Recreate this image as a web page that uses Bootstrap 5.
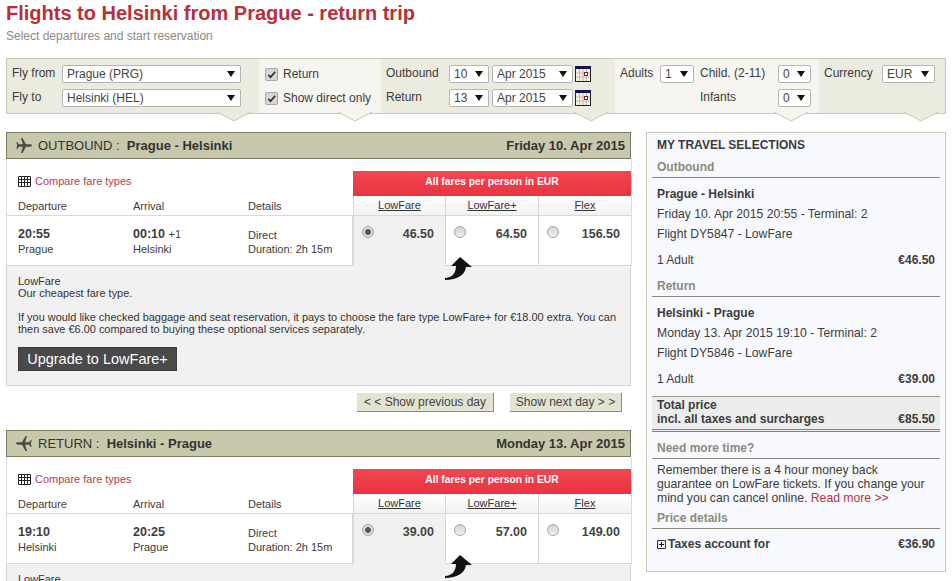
<!DOCTYPE html>
<html lang="en">
<head>
<meta charset="utf-8">
<title>Flights to Helsinki from Prague</title>
<link rel="stylesheet" href="https://cdn.jsdelivr.net/npm/bootstrap@5.3.0/dist/css/bootstrap.min.css">
<style>
html,body{overflow:hidden;height:581px;}
body{font-family:"Liberation Sans",Arial,sans-serif;font-size:12px;line-height:14px;color:#3c3c3c;background:#fff;padding:0 6px;}
.page-title{font-size:20px;line-height:24px;font-weight:700;color:#b92f38;margin:1px 0 0;}
.page-sub{color:#8a8a8a;font-size:12px;line-height:14px;margin:4px 0 0;}
.search-bar{height:56px;margin-top:15px;border:1px solid #c9c9b2;}
.seg{position:relative;height:54px;padding:6px 0 0 5px;display:grid;row-gap:6px;grid-auto-rows:18px;align-items:center;background:#ecebdf;}
.seg-light{background:#f6f5ef;}
.seg>span{padding-bottom:2px;}
.seg1{width:252px;grid-template-columns:50px 179px;}
.seg2{width:122px;padding-left:6px;}
.seg3{width:234px;padding-left:5px;grid-template-columns:63px 40px 84px 19px;}
.seg3 .sel-month{margin-left:3px;width:81px;}
.seg3 .cal{margin-left:2px;}
.seg4{width:204px;padding-left:5px;grid-template-columns:40px 34px 84px 33px;}
.seg4 .lab2{padding-left:6px;}
.seg5{flex:1;padding-left:5px;grid-template-columns:58px 53px;}
.notch{position:absolute;top:53px;width:34px;height:10px;display:block;}
.seg1 .notch{left:210px}.seg2 .notch{left:79px}.seg3 .notch{left:193px}.seg4 .notch{left:159px}.seg5 .notch{left:85px}
.seg .notch{fill:#ecebdf}.seg-light .notch{fill:#f6f5ef}
.form-select.pick{height:18px;min-height:0;padding:0 14px 0 4px;font-size:12px;line-height:16px;color:#444;border:1px solid #b5b5b5;border-radius:2px;font-family:inherit;background-position:right 5px center;background-size:8px 6px;background-image:url("data:image/svg+xml,%3Csvg xmlns='http://www.w3.org/2000/svg' viewBox='0 0 8 6'%3E%3Cpath d='M0 0h8L4 6z' fill='%23111'/%3E%3C/svg%3E");box-shadow:none;}
.tick{display:flex;align-items:center;gap:5px;margin:0;white-space:nowrap;}
.tick .form-check-input{width:13px;height:13px;margin:0;border:1px solid #a8a8a8;border-radius:2px;background-color:#d6d6d6;background-size:11px;background-image:url("data:image/svg+xml,%3Csvg xmlns='http://www.w3.org/2000/svg' viewBox='0 0 12 12'%3E%3Cpath d='M2.5 6.5l2.500 2.500 5-6' fill='none' stroke='%23333' stroke-width='2'/%3E%3C/svg%3E");}
.main-wrap{margin-top:18px;gap:15px;align-items:flex-start;}
.left-col{width:625px;flex:none;}
.side-panel{width:300px;height:440px;flex:none;background:#f8f9fe;border:1px solid #c9c9b6;padding:0 5px;}
.sec-head{height:27px;background:#c8c8ac;border:1px solid #7c7c66;padding:0 5px 0 9px;font-size:13px;color:#333;}
.sec-head .plane{margin-right:6px;}
.flights{height:107px;}
.flight-left{width:347px;flex:none;border-left:1px solid #dcdcdc;}
.flight-top{height:57px;padding:15px 0 0 11px;border-bottom:1px solid #d8d8d8;}
.compare{display:flex;align-items:center;gap:4px;font-size:11px;line-height:14px;color:#b8404a;text-decoration:none;}
.flight-cols{margin-top:11px;font-size:11px;}
.c1{width:115px;}.c2{width:115px;}
.flight-row{height:50px;padding:11px 0 0 11px;border-bottom:1px solid #d8d8d8;border-right:1px solid #d8d8d8;font-size:11px;line-height:14px;}
.flight-row strong{display:block;font-size:12.5px;line-height:15px;}
.plus-one{font-size:11px;font-weight:400;}
.details{padding-top:1px;}
.fares{flex:1;border-right:1px solid #dcdcdc;}
.red-bar{height:25px;margin-top:12px;background:linear-gradient(#f24751,#ea3340);color:#fff;font-weight:700;font-size:10.300px;line-height:22px;text-align:center;}
.fare-heads{height:20px;border-bottom:1px solid #d8d8d8;background:linear-gradient(#fff,#f2f2f2);}
.fare-heads div{width:93px;text-align:center;font-size:11px;line-height:18px;border-left:1px solid #d8d8d8;text-decoration:underline;color:#333;}
.fare-heads div:first-child{width:92px;}
.fare-cells{height:50px;}
.fare{position:relative;width:93px;height:50px;border-left:1px solid #d8d8d8;border-bottom:1px solid #d8d8d8;padding:11px 11px 0 8px;font-size:12.500px;line-height:15px;}
.fare:first-child{width:92px;}
.fare.on{background:#f1f1f1;border-bottom-color:#f1f1f1;}
.fare .form-check-input{width:12px;height:12px;margin:-1px 0 0;border:1px solid #a8a8a8;background-color:#dedede;background-image:linear-gradient(#d4d4d4,#f0f0f0);}
.fare .form-check-input:checked{background-image:radial-gradient(circle,#555 0 2.500px,#dadada 3.200px);}
.fare .price{margin-left:auto;font-weight:700;color:#444;}
.up-arrow{position:absolute;left:-1px;top:41px;width:27px;height:23px;z-index:2;}
.detail-box{height:120px;background:#f1f1f1;border:1px solid #d4d4d4;border-top:0;padding:9px 5px 0 11px;font-size:10.950px;line-height:12px;color:#333;}
.detail-box p{margin:0 0 12px;}
.btn.upgrade{height:24px;width:159px;padding:0;background:#4a4a4a;color:#fff;border:1px solid #3c3c3c;border-radius:0;font-size:14.500px;line-height:20px;}
.day-nav{height:44px;padding:7px 9px 0 0;gap:16px;}
.btn.day-btn{height:19px;padding:0;background:#e3e3d2;color:#444;border:0;border-right:1px solid #8d8d78;border-bottom:1px solid #8d8d78;border-radius:0;font-size:12px;line-height:17px;white-space:nowrap;}
.btn.day-prev{width:137px;}.btn.day-next{width:112px;}
.side-title{font-weight:700;color:#3a3a3a;padding:5px 5px 0;height:24px;line-height:14px;}
.side-h{font-weight:700;color:#8b8b7a;height:21px;padding:3px 5px 0;border-bottom:1px solid #85857a;}
.side-line{height:20px;line-height:20px;padding:0 5px;white-space:nowrap;font-size:12.200px;}
.side-first{margin-top:6px;font-size:12px;}
.side-sum{height:20px;line-height:20px;padding:0 5px;margin-top:6px;margin-bottom:6px;}
.total-box{margin-top:7px;height:36px;background:#ededed;border-top:1px solid #9a9a88;border-bottom:3px double #85857a;padding:1px 5px 0;font-weight:700;line-height:14px;}
.side-need{margin-top:6px;}
.side-para{padding:4px 5px 0;line-height:14px;font-size:12.200px;}
.side-para a{color:#b8323e;text-decoration:none;}
.side-price{margin-top:3px;}
.plus-row{padding:8px 5px 0;font-weight:700;}
.plus-row svg{margin-right:2px;}
</style>
</head>
<body>
<h1 class="page-title">Flights to Helsinki from Prague - return trip</h1>
<p class="page-sub">Select departures and start reservation</p>

<form class="search-bar d-flex position-relative">
  <div class="seg seg1">
    <span>Fly from</span>
    <select class="form-select pick"><option>Prague (PRG)</option></select>
    <span>Fly to</span>
    <select class="form-select pick"><option>Helsinki (HEL)</option></select>
    <svg class="notch" viewBox="0 0 34 10"><polygon points="0,0 17,9 34,0"/><polyline points="0,0 17,9 34,0" fill="none" stroke="#c9c9b2"/></svg>
  </div>
  <div class="seg seg-light seg2">
    <label class="tick"><input class="form-check-input" type="checkbox" checked>Return</label>
    <label class="tick"><input class="form-check-input" type="checkbox" checked>Show direct only</label>
    <svg class="notch" viewBox="0 0 34 10"><polygon points="0,0 17,9 34,0"/><polyline points="0,0 17,9 34,0" fill="none" stroke="#c9c9b2"/></svg>
  </div>
  <div class="seg seg3">
    <span>Outbound</span>
    <select class="form-select pick"><option>10</option></select>
    <select class="form-select pick sel-month"><option>Apr 2015</option></select>
    <svg class="cal" width="16" height="16" viewBox="0 0 16 16"><rect x=".5" y=".5" width="15" height="15" fill="#f6f5dc" stroke="#222"/><rect x="0" y="0" width="16" height="3" fill="#14145e"/><path d="M4.500 3v12M8 3v12M11.500 3v12M1 7h14M1 11h14" stroke="#b8b8c8" fill="none"/><rect x="9.500" y="6.500" width="3" height="3" fill="#fff" stroke="#8a1a24"/></svg>
    <span>Return</span>
    <select class="form-select pick"><option>13</option></select>
    <select class="form-select pick sel-month"><option>Apr 2015</option></select>
    <svg class="cal" width="16" height="16" viewBox="0 0 16 16"><rect x=".5" y=".5" width="15" height="15" fill="#f6f5dc" stroke="#222"/><rect x="0" y="0" width="16" height="3" fill="#14145e"/><path d="M4.500 3v12M8 3v12M11.500 3v12M1 7h14M1 11h14" stroke="#b8b8c8" fill="none"/><rect x="9.500" y="6.500" width="3" height="3" fill="#fff" stroke="#8a1a24"/></svg>
    <svg class="notch" viewBox="0 0 34 10"><polygon points="0,0 17,9 34,0"/><polyline points="0,0 17,9 34,0" fill="none" stroke="#c9c9b2"/></svg>
  </div>
  <div class="seg seg-light seg4">
    <span>Adults</span>
    <select class="form-select pick"><option>1</option></select>
    <span class="lab2">Child. (2-11)</span>
    <select class="form-select pick"><option>0</option></select>
    <span></span><span></span>
    <span class="lab2">Infants</span>
    <select class="form-select pick"><option>0</option></select>
    <svg class="notch" viewBox="0 0 34 10"><polygon points="0,0 17,9 34,0"/><polyline points="0,0 17,9 34,0" fill="none" stroke="#c9c9b2"/></svg>
  </div>
  <div class="seg seg5">
    <span>Currency</span>
    <select class="form-select pick"><option>EUR</option></select>
    <svg class="notch" viewBox="0 0 34 10"><polygon points="0,0 17,9 34,0"/><polyline points="0,0 17,9 34,0" fill="none" stroke="#c9c9b2"/></svg>
  </div>
</form>

<div class="d-flex main-wrap">
  <div class="left-col">
    <section>
      <div class="sec-head d-flex align-items-center justify-content-between">
        <span class="d-flex align-items-center"><svg class="plane" width="16" height="15" viewBox="0 0 16 15"><path d="M16 7.500c0-.8-1.200-1.200-2.500-1.200H10L6.500 0H5l1.800 6.300H3L1.500 4.300H.3L1.200 7.500.3 10.700h1.200L3 8.700h3.800L5 15h1.500L10 8.700h3.500c1.300 0 2.500-.4 2.500-1.200z" fill="#4c4c40"/></svg><span>OUTBOUND :&nbsp; <b>Prague - Helsinki</b></span></span>
        <b>Friday 10. Apr 2015</b>
      </div>
      <div class="flights d-flex">
        <div class="flight-left">
          <div class="flight-top">
            <a class="compare" href="#"><svg width="13" height="11" viewBox="0 0 13 11"><path d="M.5 .5h12v10H.5zM.5 3.500h12M.5 6.500h12M3.500 .5v10M6.500 .5v10M9.500 .5v10" fill="none" stroke="#222"/></svg>Compare fare types</a>
            <div class="flight-cols d-flex"><div class="c1">Departure</div><div class="c2">Arrival</div><div>Details</div></div>
          </div>
          <div class="flight-row d-flex">
            <div class="c1"><strong>20:55</strong>Prague</div>
            <div class="c2"><strong>00:10 <span class="plus-one">+1</span></strong>Helsinki</div>
            <div class="details">Direct<br>Duration: 2h 15m</div>
          </div>
        </div>
        <div class="fares">
          <div class="red-bar">All fares per person in EUR</div>
          <div class="fare-heads d-flex"><div>LowFare</div><div>LowFare+</div><div>Flex</div></div>
          <div class="fare-cells d-flex">
            <label class="fare on d-flex align-items-start"><input class="form-check-input" type="radio" name="o" checked><b class="price">46.50</b></label>
            <label class="fare d-flex align-items-start"><input class="form-check-input" type="radio" name="o"><b class="price">64.50</b>
              <svg class="up-arrow" viewBox="0 0 27 23"><path d="M15 0L27 10H21C20 18 12 23 0 23V21C7 21 11 16 11 9H6z" fill="#111"/></svg></label>
            <label class="fare d-flex align-items-start"><input class="form-check-input" type="radio" name="o"><b class="price">156.50</b></label>
          </div>
        </div>
      </div>
      <div class="detail-box">
        <p>LowFare<br>Our cheapest fare type.</p>
        <p>If you would like checked baggage and seat reservation, it pays to choose the fare type LowFare+ for €18.00 extra. You can then save €6.00 compared to buying these optional services separately.</p>
        <button type="button" class="btn upgrade">Upgrade to LowFare+</button>
      </div>
    </section>
    <div class="day-nav d-flex justify-content-end">
      <button type="button" class="btn day-btn day-prev">&lt; &lt; Show previous day</button>
      <button type="button" class="btn day-btn day-next">Show next day &gt; &gt;</button>
    </div>
    <section>
      <div class="sec-head d-flex align-items-center justify-content-between">
        <span class="d-flex align-items-center"><svg class="plane" width="16" height="15" viewBox="0 0 16 15"><path d="M0 7.500c0-.8 1.200-1.200 2.500-1.200H6L9.500 0H11L9.200 6.300H13l1.500-2h1.200l-.9 3.200.9 3.200h-1.200L13 8.700H9.200L11 15H9.500L6 8.700H2.500C1.200 8.700 0 8.300 0 7.500z" fill="#4c4c40"/></svg><span>RETURN :&nbsp; <b>Helsinki - Prague</b></span></span>
        <b>Monday 13. Apr 2015</b>
      </div>
      <div class="flights d-flex">
        <div class="flight-left">
          <div class="flight-top">
            <a class="compare" href="#"><svg width="13" height="11" viewBox="0 0 13 11"><path d="M.5 .5h12v10H.5zM.5 3.500h12M.5 6.500h12M3.500 .5v10M6.500 .5v10M9.500 .5v10" fill="none" stroke="#222"/></svg>Compare fare types</a>
            <div class="flight-cols d-flex"><div class="c1">Departure</div><div class="c2">Arrival</div><div>Details</div></div>
          </div>
          <div class="flight-row d-flex">
            <div class="c1"><strong>19:10</strong>Helsinki</div>
            <div class="c2"><strong>20:25</strong>Prague</div>
            <div class="details">Direct<br>Duration: 2h 15m</div>
          </div>
        </div>
        <div class="fares">
          <div class="red-bar">All fares per person in EUR</div>
          <div class="fare-heads d-flex"><div>LowFare</div><div>LowFare+</div><div>Flex</div></div>
          <div class="fare-cells d-flex">
            <label class="fare on d-flex align-items-start"><input class="form-check-input" type="radio" name="r" checked><b class="price">39.00</b></label>
            <label class="fare d-flex align-items-start"><input class="form-check-input" type="radio" name="r"><b class="price">57.00</b>
              <svg class="up-arrow" viewBox="0 0 27 23"><path d="M15 0L27 10H21C20 18 12 23 0 23V21C7 21 11 16 11 9H6z" fill="#111"/></svg></label>
            <label class="fare d-flex align-items-start"><input class="form-check-input" type="radio" name="r"><b class="price">149.00</b></label>
          </div>
        </div>
      </div>
      <div class="detail-box"><p>LowFare</p></div>
    </section>
  </div>

  <aside class="side-panel">
    <div class="side-title">MY TRAVEL SELECTIONS</div>
    <div class="side-h">Outbound</div>
    <div class="side-line side-first fw-bold">Prague - Helsinki</div>
    <div class="side-line">Friday 10. Apr 2015 20:55 - Terminal: 2</div>
    <div class="side-line">Flight DY5847 - LowFare</div>
    <div class="side-sum d-flex justify-content-between"><span>1 Adult</span><b>€46.50</b></div>
    <div class="side-h">Return</div>
    <div class="side-line side-first fw-bold">Helsinki - Prague</div>
    <div class="side-line">Monday 13. Apr 2015 19:10 - Terminal: 2</div>
    <div class="side-line">Flight DY5846 - LowFare</div>
    <div class="side-sum d-flex justify-content-between mb-0"><span>1 Adult</span><b>€39.00</b></div>
    <div class="total-box"><div>Total price</div><div class="d-flex justify-content-between"><span>incl. all taxes and surcharges</span><span>€85.50</span></div></div>
    <div class="side-h side-need">Need more time?</div>
    <div class="side-para">Remember there is a 4 hour money back<br>guarantee on LowFare tickets. If you change your<br>mind you can cancel online. <a href="#">Read more &gt;&gt;</a></div>
    <div class="side-h side-price">Price details</div>
    <div class="plus-row d-flex justify-content-between"><span class="d-flex align-items-center"><svg width="9" height="9" viewBox="0 0 9 9"><path d="M.5 .5h8v8h-8z" fill="#eee" stroke="#333"/><path d="M2 4.500h5M4.500 2v5" stroke="#111"/></svg>Taxes account for</span><span>€36.90</span></div>
  </aside>
</div>
<script src="https://cdn.jsdelivr.net/npm/bootstrap@5.3.0/dist/js/bootstrap.bundle.min.js"></script>
</body>
</html>
